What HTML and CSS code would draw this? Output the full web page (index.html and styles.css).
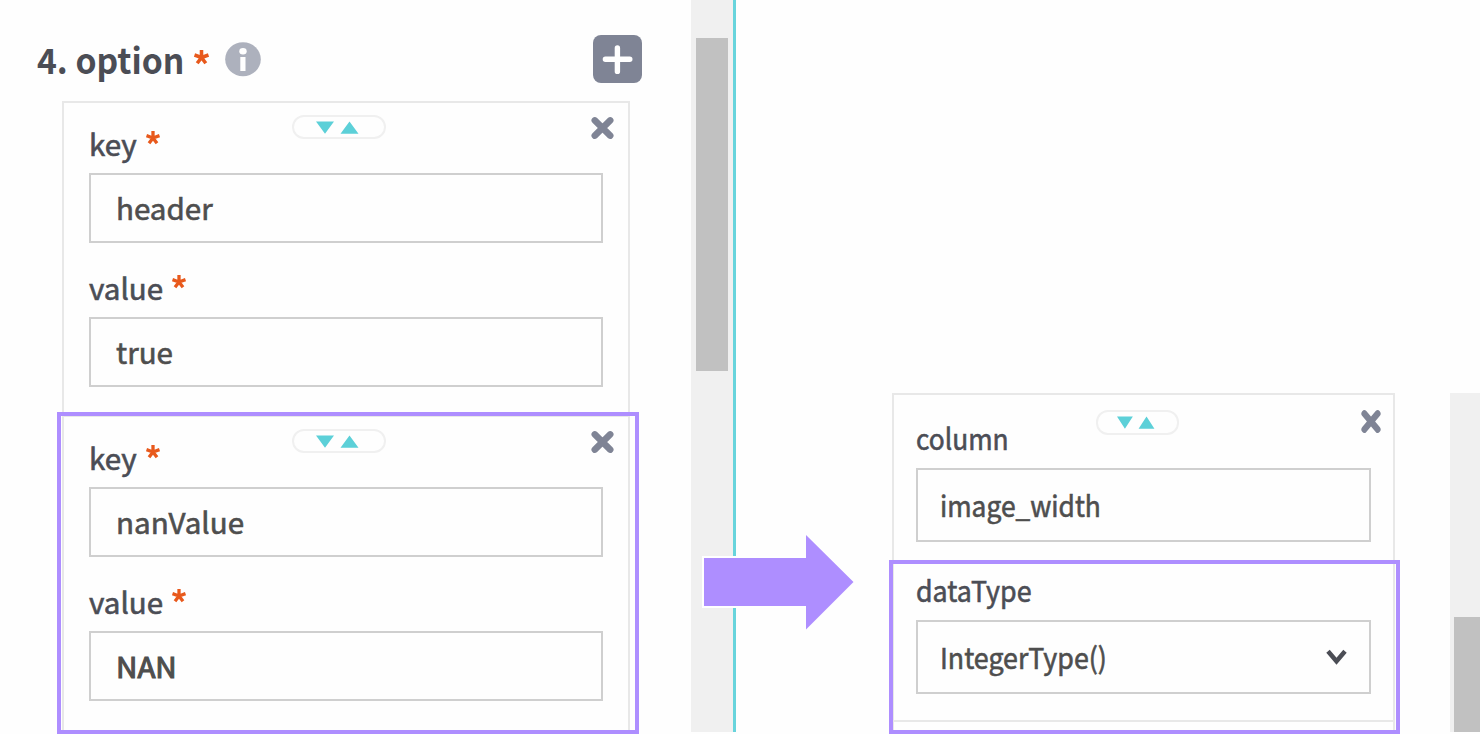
FILE: index.html
```html
<!DOCTYPE html>
<html lang="en">
<head>
<meta charset="utf-8">
<title>Option settings</title>
<link rel="stylesheet" href="styles.css">
</head>
<body>
<main class="stage">
  <section class="panel">
    <header class="panel-head">
      <h1 class="title"><span class="title-text">4. option</span></h1>
      <svg class="star star-title" viewBox="0 0 16 15"><path d="M8 0v8M0.5 5.4L8 8M15.5 5.4L8 8M3.4 14.2L8 8M12.6 14.2L8 8"/></svg>
      <svg class="info" viewBox="0 0 36 35"><ellipse cx="18" cy="17.3" rx="17.8" ry="17" fill="#adb1bd"/><ellipse cx="18" cy="9.2" rx="3.7" ry="3.2" fill="#fff"/><path d="M15.3 15h5.2v14h-5.2z" fill="#fff"/></svg>
      <button class="add" aria-label="Add"><svg viewBox="0 0 49 48"><path d="M24.4 13v23.4M12.4 24.3h24.4"/></svg></button>
    </header>
    <div class="cards">
      <article class="card">
        <div class="mover"><svg viewBox="0 0 42 13"><path d="M0 .5h18L9 12.7zM24.5 12.7h18L33.5 .5z"/></svg></div>
        <svg class="close" viewBox="0 0 23 22"><path d="M3.8 3.4l15.400 15.200M19.200 3.400L3.800 18.600"/></svg>
        <label class="label"><span class="txt">key</span><svg class="star" viewBox="0 0 16 15"><path d="M8 0v8M0.5 5.4L8 8M15.5 5.4L8 8M3.4 14.2L8 8M12.6 14.2L8 8"/></svg></label>
        <div class="input"><span class="txt">header</span></div>
        <label class="label second"><span class="txt">value</span><svg class="star" viewBox="0 0 16 15"><path d="M8 0v8M0.5 5.4L8 8M15.5 5.4L8 8M3.4 14.2L8 8M12.6 14.2L8 8"/></svg></label>
        <div class="input"><span class="txt">true</span></div>
      </article>
      <article class="card">
        <div class="mover"><svg viewBox="0 0 42 13"><path d="M0 .5h18L9 12.7zM24.5 12.7h18L33.5 .5z"/></svg></div>
        <svg class="close" viewBox="0 0 23 22"><path d="M3.8 3.4l15.400 15.200M19.200 3.400L3.800 18.600"/></svg>
        <label class="label"><span class="txt">key</span><svg class="star" viewBox="0 0 16 15"><path d="M8 0v8M0.5 5.4L8 8M15.5 5.4L8 8M3.4 14.2L8 8M12.6 14.2L8 8"/></svg></label>
        <div class="input"><span class="txt">nanValue</span></div>
        <label class="label second"><span class="txt">value</span><svg class="star" viewBox="0 0 16 15"><path d="M8 0v8M0.5 5.4L8 8M15.5 5.4L8 8M3.4 14.2L8 8M12.6 14.2L8 8"/></svg></label>
        <div class="input"><span class="txt strong">NAN</span></div>
      </article>
    </div>
  </section>
  <div class="scrollbar"><div class="thumb"></div></div>
  <section class="result">
    <article class="card narrow">
      <div class="mover"><svg viewBox="0 0 42 13" preserveAspectRatio="none"><path d="M0 .5h18L9 12.7zM24.5 12.7h18L33.5 .5z"/></svg></div>
      <svg class="close" viewBox="0 0 23 22" preserveAspectRatio="none"><path d="M3.8 3.4l15.400 15.200M19.200 3.400L3.800 18.600"/></svg>
      <label class="label"><span class="txt">column</span></label>
      <div class="input"><span class="txt">image_width</span></div>
      <label class="label second"><span class="txt wide">dataType</span></label>
      <div class="input select"><span class="txt wide">IntegerType()</span><svg class="chevron" viewBox="0 0 21 16"><path d="M2 2.3l8.500 10L19 2.300"/></svg></div>
      <div class="divider"></div>
    </article>
    <div class="scrollbar-right"><div class="thumb-right"></div></div>
  </section>
  <div class="highlight highlight-left"></div>
  <div class="highlight highlight-right"></div>
  <svg class="arrow" viewBox="0 0 152 96"><path d="M0 21h106v52H0z" fill="#fff"/><path d="M2 23h102V0l47.500 47L104 94.500V71H2z" fill="#ae8eff"/></svg>
</main>
</body>
</html>
```

FILE: styles.css
```css
* { box-sizing: border-box; }
body { margin: 0; background: #fff; font-family: "Noto Sans CJK KR", "Noto Sans", sans-serif; color: #4b4d55; }
svg { display: block; flex: none; overflow: visible; }

.stage { position: relative; display: flex; width: 1480px; height: 734px; overflow: hidden; background: #fefefe; }
.panel { width: 691px; height: 732px; overflow: hidden; flex: none; }

.panel-head { display: flex; align-items: flex-start; height: 101px; padding: 35px 49px 0 37px; }
.title { margin: 0; width: 157px; font-size: 35px; font-weight: 700; line-height: 48px; white-space: nowrap; }
.title-text { display: inline-block; transform: scaleX(.962); transform-origin: 0 50%; }
.star { width: 14px; height: 13px; fill: none; stroke: #e8591c; stroke-width: 3.8; }
.star-title { width: 15px; height: 14px; margin-top: 15px; }
.info { width: 36px; height: 35px; margin: 7px 0 0 16px; }
.add { width: 49px; height: 48px; margin-left: auto; padding: 0; border: 0; border-radius: 8px; background: #7f8495; }
.add svg { width: 49px; height: 48px; fill: none; stroke: #fff; stroke-width: 5.4; stroke-linecap: round; }

.cards { padding-left: 62px; }
.card { position: relative; width: 568px; height: 314px; padding: 27px 25px 0; border: 2px solid #e8e8e8; border-bottom: 0; }
.card:first-child { height: 315px; margin-bottom: -1px; }
.card + .card { height: 320px; }
.mover { position: absolute; left: 228px; top: 12px; display: flex; justify-content: center; align-items: center; width: 94px; height: 24px; padding-right: 4px; border: 2px solid #f0f0f0; border-radius: 12px; }
.mover svg { width: 42px; height: 13px; fill: #5cd0d8; }
.close { position: absolute; left: 527px; top: 14px; width: 23px; height: 22px; fill: none; stroke: #7f8495; stroke-width: 6.6; stroke-linecap: round; }

.label { display: flex; height: 43px; font-size: 29px; line-height: 26px; -webkit-text-stroke: .6px currentColor; }
.label .star { margin: 1px 0 0 10px; }
.second { height: 44px; margin-top: 30px; padding-top: 1px; }
.input { display: flex; align-items: center; width: 514px; height: 70px; padding: 0 25px 3px; border: 2px solid #cfcfcf; color: #4e4e4e; font-size: 29px; line-height: 40px; -webkit-text-stroke: .6px currentColor; }
.txt { display: inline-block; white-space: nowrap; transform: scaleX(1.02); transform-origin: 0 50%; }
.strong { -webkit-text-stroke-width: 1.1px; }

.scrollbar { width: 45px; height: 732px; padding: 38px 0 0 5px; background: #f0f0f0; border-right: 3px solid #68d4dc; flex: none; }
.thumb { width: 32px; height: 333px; background: #c1c1c1; }

.result { display: flex; justify-content: space-between; flex: 1; height: 732px; padding: 393px 0 0 156px; overflow: hidden; }
.narrow.card { width: 503px; height: 341px; margin: 0; padding: 30px 22px 0; }
.narrow .mover { left: 202px; top: 15px; width: 83px; height: 25px; }
.narrow .mover svg { width: 37px; height: 13px; }
.narrow .close { left: 467px; top: 15px; width: 20px; height: 23px; }
.narrow .input { width: 455px; height: 74px; padding: 0 22px 2px; }
.narrow .label { height: 43px; line-height: 25px; }
.narrow .second { height: 48px; line-height: 32px; }
.narrow .txt { transform: scaleX(.908); }
.narrow .wide { transform: scaleX(.923); }
.select { justify-content: space-between; }
.chevron { width: 21px; height: 16px; margin-top: 2px; fill: none; stroke: #4b4d55; stroke-width: 4.5; }
.divider { height: 2px; margin: 26px -22px 0; background: #e8e8e8; }
.scrollbar-right { width: 30px; height: 339px; padding: 224px 0 0 4px; background: #f0f0f0; }
.thumb-right { height: 115px; background: #c1c1c1; }

.highlight { position: absolute; border: 4px solid #ae8eff; }
.highlight-left { left: 57px; top: 412px; width: 582px; height: 322px; }
.highlight-right { left: 889px; top: 560px; width: 511px; height: 174px; }
.arrow { position: absolute; left: 702px; top: 535px; width: 152px; height: 96px; }
```
